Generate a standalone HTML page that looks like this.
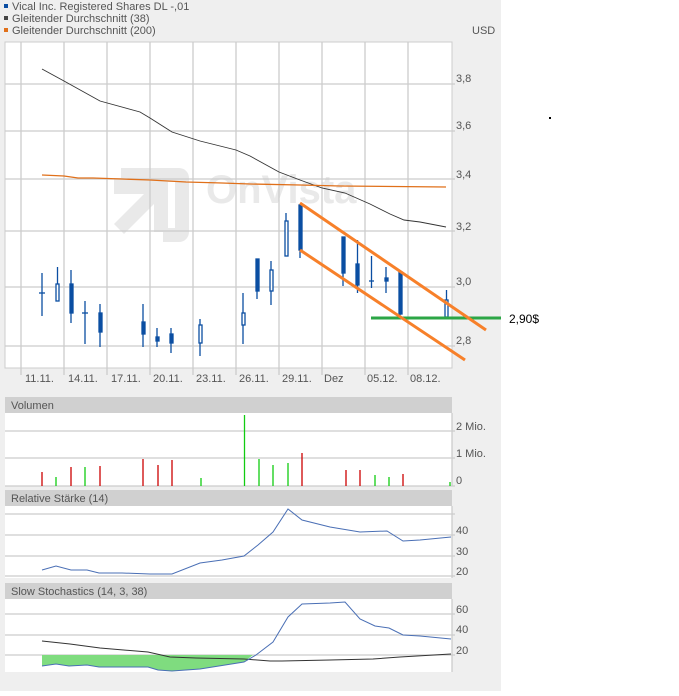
<!DOCTYPE html>
<html><head><meta charset="utf-8"><style>
body{margin:0;width:679px;height:691px;background:#fff;overflow:hidden;font-family:"Liberation Sans",sans-serif}
</style></head><body>
<svg width="679" height="691" xmlns="http://www.w3.org/2000/svg" font-family="Liberation Sans, sans-serif" font-size="11">
<rect x="0" y="0" width="501" height="691" fill="#efefef"/>
<!-- legend -->
<rect x="4" y="4" width="4" height="4" fill="#0b4ea2"/><text x="12" y="10" fill="#555">Vical Inc. Registered Shares DL -,01</text>
<rect x="4" y="16" width="4" height="4" fill="#444"/><text x="12" y="22" fill="#555">Gleitender Durchschnitt (38)</text>
<rect x="4" y="28" width="4" height="4" fill="#e0701a"/><text x="12" y="34" fill="#555">Gleitender Durchschnitt (200)</text>
<text x="472" y="34" fill="#555">USD</text>
<!-- main plot -->
<rect x="5" y="42" width="447" height="326" fill="#fff" stroke="#ccc"/>
<!-- watermark -->
<g fill="#e9e9e9">
<path d="M121 168h58a10 10 0 0 1 10 10v54a10 10 0 0 1-10 10h-16v-14h12v-46h-54z"/>
<path d="M114 178h14v14h-14z"/>
<path d="M114 200h30l-30 30 10 10 30-30v28h14v-52h-54z" transform="translate(0,-6)"/>
<text x="206" y="203" font-size="40" font-weight="bold">OnVista</text>
</g>
<g stroke="#ccc" stroke-width="1.3">
<line x1="21" y1="42" x2="21" y2="375"/><line x1="64" y1="42" x2="64" y2="375"/><line x1="107" y1="42" x2="107" y2="375"/><line x1="150" y1="42" x2="150" y2="375"/><line x1="193" y1="42" x2="193" y2="375"/><line x1="236" y1="42" x2="236" y2="375"/><line x1="279" y1="42" x2="279" y2="375"/><line x1="322" y1="42" x2="322" y2="375"/><line x1="365" y1="42" x2="365" y2="375"/><line x1="408" y1="42" x2="408" y2="375"/>
<line x1="5" y1="84" x2="455" y2="84"/><line x1="5" y1="131" x2="455" y2="131"/><line x1="5" y1="179" x2="455" y2="179"/><line x1="5" y1="231" x2="455" y2="231"/><line x1="5" y1="287" x2="455" y2="287"/><line x1="5" y1="346" x2="455" y2="346"/>
</g>
<g fill="#555">
<text x="456" y="82">3,8</text><text x="456" y="129">3,6</text><text x="456" y="178">3,4</text><text x="456" y="230">3,2</text><text x="456" y="285">3,0</text><text x="456" y="344">2,8</text>
<text x="25" y="382">11.11.</text><text x="68" y="382">14.11.</text><text x="111" y="382">17.11.</text><text x="153" y="382">20.11.</text><text x="196" y="382">23.11.</text><text x="239" y="382">26.11.</text><text x="282" y="382">29.11.</text><text x="324" y="382">Dez</text><text x="367" y="382">05.12.</text><text x="410" y="382">08.12.</text>
</g>
<!-- MAs -->
<polyline fill="none" stroke="#333" stroke-width="0.9" points="42,69 64,81 100,101 140,112 150,118 172,132 200,141 236,150 250,156 279,172 300,180 322,188 345,193 370,204 390,214 404,220 420,222 446,227"/>
<polyline fill="none" stroke="#e0701a" stroke-width="1.3" points="42,175 64,176 78,178 93,178 122,179 150,180 186,182 222,183 250,184 300,185 340,186 446,187"/>
<!-- candles -->
<g stroke="#0b4ea2" stroke-width="1.3" fill="#0b4ea2">
<line x1="42" y1="273" x2="42" y2="316"/><line x1="39" y1="293" x2="45" y2="293"/>
<line x1="57.5" y1="267" x2="57.5" y2="301"/><rect x="56" y="284" width="3" height="17" fill="#fff"/>
<line x1="71" y1="270" x2="71" y2="323"/><rect x="70" y="284" width="3" height="29"/>
<line x1="85" y1="301" x2="85" y2="344"/><line x1="82" y1="313" x2="88" y2="313"/>
<line x1="100" y1="304" x2="100" y2="347"/><rect x="99" y="313" width="3" height="19"/>
<line x1="143" y1="304" x2="143" y2="347"/><rect x="142" y="322" width="3" height="12"/>
<line x1="157" y1="328" x2="157" y2="347"/><rect x="156" y="337" width="3" height="4"/>
<line x1="171" y1="328" x2="171" y2="353"/><rect x="170" y="334" width="3" height="9"/>
<line x1="200" y1="319" x2="200" y2="356"/><rect x="199" y="325" width="3" height="18" fill="#fff"/>
<line x1="243" y1="293" x2="243" y2="344"/><rect x="242" y="313" width="3" height="12" fill="#fff"/>
<line x1="257" y1="259" x2="257" y2="299"/><rect x="256" y="259" width="3" height="32"/>
<line x1="271" y1="261" x2="271" y2="305"/><rect x="270" y="270" width="3" height="21" fill="#fff"/>
<line x1="286" y1="213" x2="286" y2="256"/><rect x="285" y="221" width="3" height="35" fill="#fff"/>
<line x1="300" y1="205" x2="300" y2="258"/><rect x="299" y="205" width="3" height="45"/>
<line x1="343" y1="237" x2="343" y2="286"/><rect x="342" y="237" width="3" height="36"/>
<line x1="357.5" y1="240" x2="357.5" y2="293"/><rect x="356" y="264" width="3" height="21"/>
<line x1="371.5" y1="256" x2="371.5" y2="288"/><line x1="369" y1="281" x2="374" y2="281"/>
<line x1="386" y1="267" x2="386" y2="293"/><rect x="385" y="278" width="3" height="3"/>
<line x1="400" y1="272" x2="400" y2="316"/><rect x="399" y="272" width="3" height="42"/>
<line x1="446.5" y1="290" x2="446.5" y2="317"/><rect x="445" y="300" width="3" height="17" fill="#fff"/>
</g>
<!-- drawn lines -->
<line x1="371" y1="318" x2="501" y2="318" stroke="#2ca646" stroke-width="3"/>
<line x1="300" y1="203" x2="486" y2="330" stroke="#f7802a" stroke-width="3"/>
<line x1="300" y1="250" x2="465" y2="360" stroke="#f7802a" stroke-width="3"/>
<text x="509" y="323" font-size="12" fill="#000">2,90$</text>
<rect x="549" y="117" width="2" height="2" fill="#000"/>
<!-- Volume -->
<rect x="5" y="397" width="447" height="16" fill="#d0d0d0"/><text x="11" y="409" fill="#555">Volumen</text>
<rect x="5" y="413" width="447" height="73" fill="#fff"/>
<g stroke="#ccc" stroke-width="1.3"><line x1="5" y1="431" x2="455" y2="431"/><line x1="5" y1="458" x2="455" y2="458"/><line x1="5" y1="486" x2="455" y2="486"/><line x1="452" y1="413" x2="452" y2="486"/></g>
<g fill="#555"><text x="456" y="430">2 Mio.</text><text x="456" y="457">1 Mio.</text><text x="456" y="484">0</text></g>
<g stroke-width="1.3">
<g stroke="#c00"><line x1="42" y1="472" x2="42" y2="486"/><line x1="71" y1="467" x2="71" y2="486"/><line x1="100" y1="466" x2="100" y2="486"/><line x1="143" y1="459" x2="143" y2="486"/><line x1="158" y1="465" x2="158" y2="486"/><line x1="172" y1="460" x2="172" y2="486"/><line x1="302" y1="453" x2="302" y2="486"/><line x1="346" y1="470" x2="346" y2="486"/><line x1="360" y1="470" x2="360" y2="486"/><line x1="403" y1="474" x2="403" y2="486"/></g>
<g stroke="#1c1"><line x1="56" y1="477" x2="56" y2="486"/><line x1="85" y1="467" x2="85" y2="486"/><line x1="201" y1="478" x2="201" y2="486"/><line x1="244.5" y1="415" x2="244.5" y2="486"/><line x1="259" y1="459" x2="259" y2="486"/><line x1="273" y1="465" x2="273" y2="486"/><line x1="288" y1="463" x2="288" y2="486"/><line x1="375" y1="475" x2="375" y2="486"/><line x1="389" y1="477" x2="389" y2="486"/><line x1="450" y1="482" x2="450" y2="486"/></g>
</g>
<!-- RSI -->
<rect x="5" y="490" width="447" height="16" fill="#d0d0d0"/><text x="11" y="502" fill="#555">Relative Stärke (14)</text>
<rect x="5" y="506" width="447" height="72" fill="#fff"/>
<g stroke="#ccc" stroke-width="1.3"><line x1="5" y1="514" x2="455" y2="514"/><line x1="5" y1="535" x2="455" y2="535"/><line x1="5" y1="556" x2="455" y2="556"/><line x1="5" y1="576" x2="455" y2="576"/><line x1="452" y1="506" x2="452" y2="578"/></g>
<g fill="#555"><text x="456" y="534">40</text><text x="456" y="555">30</text><text x="456" y="575">20</text></g>
<polyline fill="none" stroke="#4a6fb5" stroke-width="1" points="42,570 56,566 71,570 87,570 99,573 122,573 150,574 172,574 200,563 222,560 244,556 258,545 273,532 288,509 302,520 330,527 360,532 387,531 403,541 420,540 451,537"/>
<!-- Stoch -->
<rect x="5" y="583" width="447" height="16" fill="#d0d0d0"/><text x="11" y="595" fill="#555">Slow Stochastics (14, 3, 38)</text>
<rect x="5" y="599" width="447" height="73" fill="#fff"/>
<g stroke="#ccc" stroke-width="1.3"><line x1="5" y1="614" x2="455" y2="614"/><line x1="5" y1="635" x2="455" y2="635"/><line x1="5" y1="655" x2="455" y2="655"/><line x1="452" y1="599" x2="452" y2="672"/></g>
<g fill="#555"><text x="456" y="613">60</text><text x="456" y="633">40</text><text x="456" y="654">20</text></g>
<polygon fill="#7fdc7f" points="42,655 253,655 244,662 200,669 172,671 158,670 148,667 99,667 87,665 69,666 56,664 42,666"/>
<polyline fill="none" stroke="#333" stroke-width="1" points="42,641 70,644 100,648 148,652 170,657 196,658 244,659 270,661 282,661 330,660 373,659 400,657 451,654"/>
<polyline fill="none" stroke="#4a6fb5" stroke-width="1" points="42,666 56,664 69,666 87,665 99,667 148,667 158,670 172,671 200,669 244,662 256,655 273,642 288,617 302,604 330,603 345,602 360,619 375,626 389,628 403,635 420,636 451,639"/>
</svg>
</body></html>
